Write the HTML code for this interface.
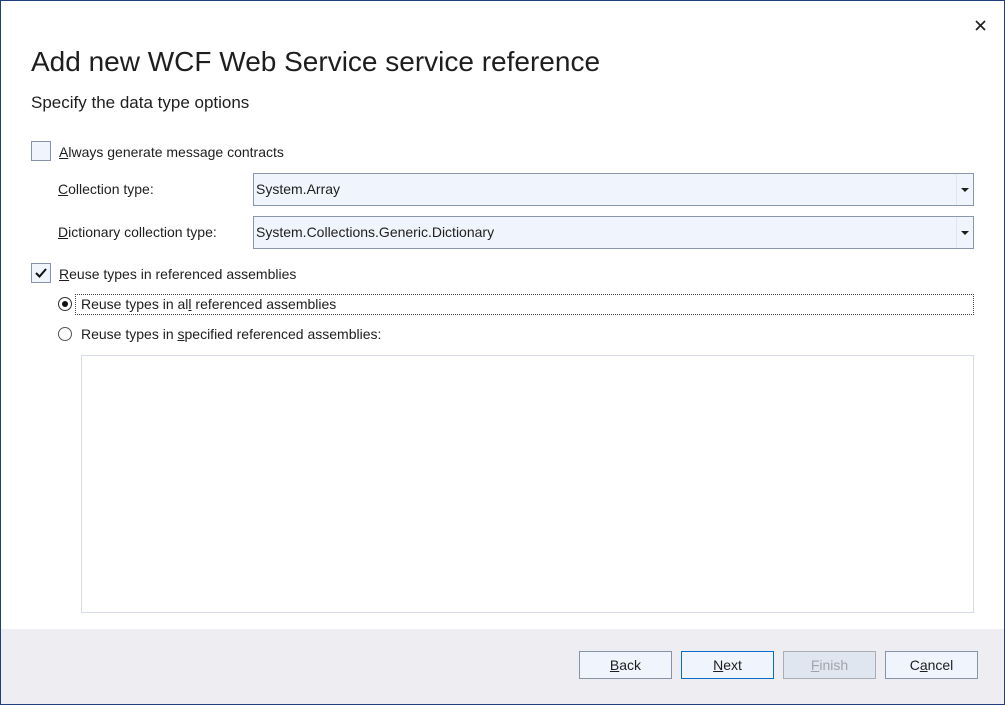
<!DOCTYPE html>
<html><head><style>
body{margin:0;width:1005px;height:705px;overflow:hidden;font-family:"Liberation Sans",sans-serif;color:#1e1e1e;font-size:14px}
.win{position:absolute;left:0;top:0;width:1005px;height:705px;background:#fff}
.bord{position:absolute;left:0;top:0;width:1003px;height:703px;border:1px solid #1f3f7a;z-index:5}
.a{position:absolute;white-space:nowrap}
.cb{position:absolute;width:18px;height:18px;border:1px solid #8592a8;background:#f0f4fc}
.combo{position:absolute;left:253px;width:719px;height:31px;border:1px solid #8a96aa;background:#f0f4fc}
.combo span{position:absolute;left:2px;top:7px}
.combo i{position:absolute;right:0;top:0;width:16px;height:31px;border-left:1px solid #e0e6f0}
.combo i:after{content:"";position:absolute;left:4px;top:14px;border-left:4px solid transparent;border-right:4px solid transparent;border-top:4px solid #1e1e1e}
.foot{position:absolute;left:0;top:629px;width:1005px;height:76px;background:#eeeef2}
.btn{position:absolute;top:651px;width:91px;height:26px;border:1px solid #8592a8;background:#f0f4fc;text-align:center;line-height:26px;font-size:14px}
u{text-decoration:underline}
</style></head><body><div class="win">
<div class="bord"></div>
<svg class="a" style="left:975px;top:20px" width="11" height="11"><path d="M1 1L10 10M10 1L1 10" stroke="#1e1e1e" stroke-width="1.6"/></svg>
<div class="a" style="left:31px;top:46px;font-size:28px;color:#1e1e1e">Add new WCF Web Service service reference</div>
<div class="a" style="left:31px;top:93px;font-size:17px">Specify the data type options</div>
<div class="cb" style="left:31px;top:141px"></div>
<div class="a" style="left:59px;top:144px"><u>A</u>lways generate message contracts</div>
<div class="a" style="left:58px;top:181px"><u>C</u>ollection type:</div>
<div class="combo" style="top:173px"><span>System.Array</span><i></i></div>
<div class="a" style="left:58px;top:224px"><u>D</u>ictionary collection type:</div>
<div class="combo" style="top:216px"><span>System.Collections.Generic.Dictionary</span><i></i></div>
<div class="cb" style="left:31px;top:263px"><svg style="position:absolute;left:3px;top:4px" width="12" height="10"><path d="M1 5L4.5 8.5L11 1" stroke="#111" stroke-width="2" fill="none"/></svg></div>
<div class="a" style="left:59px;top:266px"><u>R</u>euse types in referenced assemblies</div>
<div class="a" style="left:58px;top:297px;width:12px;height:12px;border:1px solid #333;border-radius:50%;background:#fff"><div style="position:absolute;left:3px;top:3px;width:6px;height:6px;border-radius:50%;background:#111"></div></div>
<div class="a" style="left:75px;top:294px;width:897px;height:19px;border:1px dotted #444"></div>
<div class="a" style="left:81px;top:296px">Reuse types in al<u>l</u> referenced assemblies</div>
<div class="a" style="left:58px;top:327px;width:12px;height:12px;border:1px solid #555;border-radius:50%;background:#fff"></div>
<div class="a" style="left:81px;top:326px">Reuse types in <u>s</u>pecified referenced assemblies:</div>
<div class="a" style="left:81px;top:355px;width:891px;height:256px;border:1px solid #d8dce4"></div>
<div class="foot"></div>
<div class="btn" style="left:579px"><u>B</u>ack</div>
<div class="btn" style="left:681px;border-color:#0b6cc9"><u>N</u>ext</div>
<div class="btn" style="left:783px;background:#e0e6f0;border-color:#a8adb6;color:#a0a4aa"><u>F</u>inish</div>
<div class="btn" style="left:885px">C<u>a</u>ncel</div>
</div></body></html>
